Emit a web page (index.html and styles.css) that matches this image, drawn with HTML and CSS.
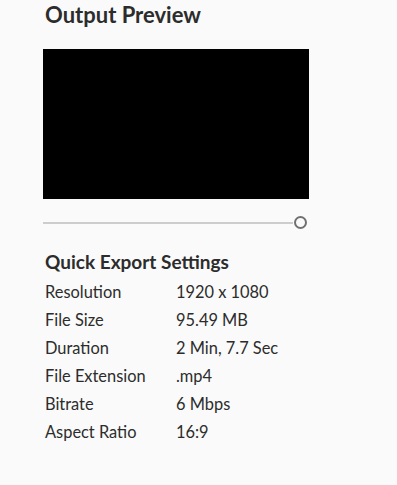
FILE: index.html
```html
<!DOCTYPE html>
<html>
<head>
<meta charset="utf-8">
<link rel="stylesheet" href="styles.css">
</head>
<body>
<div class="panel">
  <h1 class="title">Output Preview</h1>
  <div class="preview"></div>
  <div class="slider">
    <div class="track"></div>
    <div class="thumb"></div>
  </div>
  <h2 class="subtitle">Quick Export Settings</h2>
  <div class="settings">
    <div class="label">Resolution</div><div class="value">1920 x 1080</div>
    <div class="label">File Size</div><div class="value">95.49 MB</div>
    <div class="label">Duration</div><div class="value">2 Min, 7.7 Sec</div>
    <div class="label">File Extension</div><div class="value">.mp4</div>
    <div class="label">Bitrate</div><div class="value">6 Mbps</div>
    <div class="label">Aspect Ratio</div><div class="value">16:9</div>
  </div>
</div>
</body>
</html>
```
FILE: styles.css
```css
html, body {
  margin: 0;
  padding: 0;
  background: #fafafa;
}
body {
  font-family: Lato, "Open Sans", sans-serif;
  color: #2c2c2c;
}
.panel {
  padding: 0 0 0 43px;
  width: 266px;
}
.title {
  margin: 0;
  padding: 1px 0 0 2px;
  font-size: 22px;
  font-weight: 700;
  line-height: 28px;
  color: #2c2c2c;
}
.preview {
  margin-top: 20px;
  width: 266px;
  height: 150px;
  background: #000;
}
.slider {
  position: relative;
  margin-top: 17px;
  height: 14px;
  display: flex;
  align-items: center;
}
.track {
  width: 250px;
  height: 2px;
  background: #cdcdcd;
}
.thumb {
  position: absolute;
  left: 251px;
  top: 0;
  width: 9px;
  height: 9px;
  border: 2.5px solid #707070;
  border-radius: 50%;
  background: #fafafa;
}
.subtitle {
  margin: 21px 0 0;
  padding-left: 2px;
  font-size: 19px;
  font-weight: 700;
  line-height: 22px;
}
.settings {
  display: grid;
  grid-template-columns: 131px auto;
  padding-left: 2px;
  margin-top: 5px;
  font-size: 16.4px;
  line-height: 28px;
}
```
